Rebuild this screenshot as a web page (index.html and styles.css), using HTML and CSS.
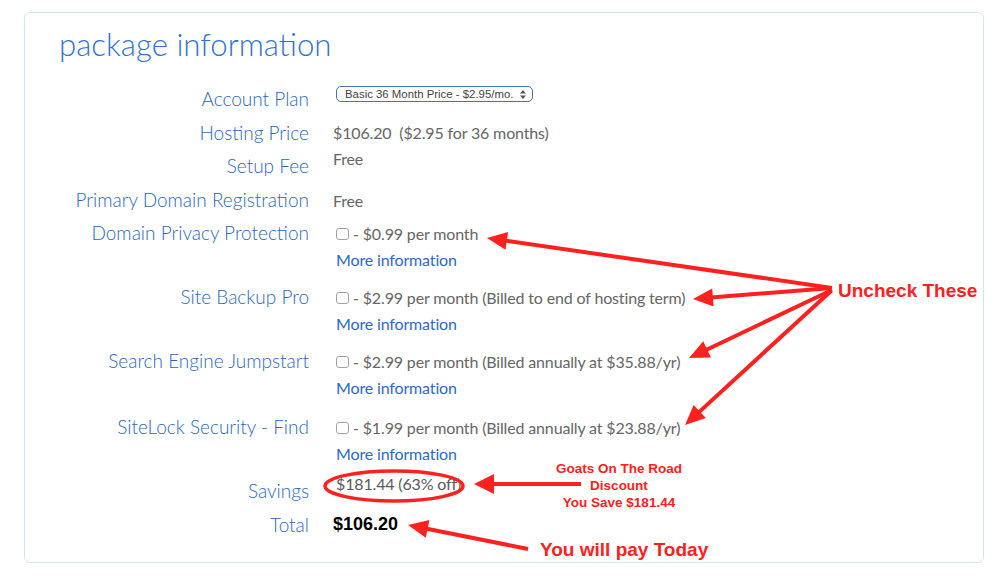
FILE: index.html
```html
<!DOCTYPE html>
<html lang="en">
<head>
    <meta charset="UTF-8">
    <meta name="viewport" content="width=device-width, initial-scale=1.0">
    <title>Package Information</title>
    <link rel="stylesheet" href="styles.css">
</head>
<body>
    <div class="page">
        <div class="card">
            <h1 class="title">package information</h1>

            <div class="form">
                <div class="row">
                    <div class="label">Account Plan</div>
                    <div class="value">
                        <div class="select">
                            <span>Basic 36 Month Price - $2.95/mo.</span>
                            <svg width="6" height="9" viewBox="0 0 6 9"><path d="M3 0 L6 3.5 H0 Z M3 9 L6 5.5 H0 Z" fill="#555"/></svg>
                        </div>
                    </div>
                </div>
                <div class="row">
                    <div class="label">Hosting Price</div>
                    <div class="value">$106.20&nbsp; ($2.95 for 36 months)</div>
                </div>
                <div class="row">
                    <div class="label">Setup Fee</div>
                    <div class="value value-high">Free</div>
                </div>
                <div class="row">
                    <div class="label">Primary Domain Registration</div>
                    <div class="value value-low">Free</div>
                </div>

                <div class="row row-option">
                    <div class="label">Domain Privacy Protection</div>
                    <div class="value">
                        <div class="line"><span class="check"></span> - $0.99 per month</div>
                        <a class="more" href="#">More information</a>
                    </div>
                </div>
                <div class="row row-option">
                    <div class="label">Site Backup Pro</div>
                    <div class="value">
                        <div class="line"><span class="check"></span> - $2.99 per month (Billed to end of hosting term)</div>
                        <a class="more" href="#">More information</a>
                    </div>
                </div>
                <div class="row row-option row-tall">
                    <div class="label">Search Engine Jumpstart</div>
                    <div class="value">
                        <div class="line"><span class="check"></span> - $2.99 per month (Billed annually at $35.88/yr)</div>
                        <a class="more" href="#">More information</a>
                    </div>
                </div>
                <div class="row row-option">
                    <div class="label">SiteLock Security - Find</div>
                    <div class="value">
                        <div class="line"><span class="check"></span> - $1.99 per month (Billed annually at $23.88/yr)</div>
                        <a class="more" href="#">More information</a>
                    </div>
                </div>

                <div class="row">
                    <div class="label">Savings</div>
                    <div class="value value-high savings">$181.44 (63% off)</div>
                </div>
                <div class="row">
                    <div class="label">Total</div>
                    <div class="value total">$106.20</div>
                </div>
            </div>
        </div>

        <!-- red annotations drawn over the screenshot -->
        <svg class="marks" width="1007" height="585" viewBox="0 0 1007 585">
            <g stroke="#ff2020" stroke-width="4" fill="none">
                <line x1="832" y1="288" x2="505" y2="240.6"/>
                <line x1="832" y1="288" x2="711" y2="297.5"/>
                <line x1="832" y1="290" x2="705.5" y2="350.2"/>
                <line x1="831" y1="291" x2="698.2" y2="412.9"/>
                <line x1="581" y1="484" x2="492" y2="484"/>
                <line x1="528" y1="549" x2="425.6" y2="528.5"/>
                <ellipse cx="394" cy="486" rx="69" ry="15" stroke-width="3.5"/>
            </g>
            <g fill="#ff2020">
                <polygon points="487,238 508.1,232 505.5,249.8"/>
                <polygon points="693,299 712.2,288.4 713.6,306.4"/>
                <polygon points="689,358 703.2,341.3 711,357.5"/>
                <polygon points="685,425 693.6,404.9 705.8,418.1"/>
                <polygon points="474,484 494,474 494,494"/>
                <polygon points="408,525 429.4,520.1 425.8,537.7"/>
            </g>
        </svg>
        <div class="note note-uncheck">Uncheck These</div>
        <div class="note note-discount">Goats On The Road<br>Discount<br>You Save $181.44</div>
        <div class="note note-pay">You will pay Today</div>
    </div>
</body>
</html>
```

FILE: styles.css
```css
body {
    margin: 0;
    background: white;
    font-family: Lato, "Open Sans", sans-serif;
}
.page {
    position: relative;
    width: 1007px;
    height: 585px;
    padding: 12px 23px 0 24px;
    box-sizing: border-box;
}
.card {
    border: 1px solid #d5e6f3;
    border-radius: 6px;
    padding: 11px 36px 21px 36px;
}
.title {
    margin: 0 0 0 -2px;
    font-size: 31.2px;
    line-height: 40px;
    font-weight: 300;
    color: #2f72d2;
}
.form {
    margin-top: 18px;
}
.row {
    display: grid;
    grid-template-columns: 248px 1fr;
    column-gap: 24px;
}
.label {
    text-align: right;
    font-size: 19px;
    font-weight: 300;
    line-height: 33.5px;
    color: #2a68bd;
    white-space: nowrap;
}
.value {
    font-size: 16px;
    letter-spacing: -0.15px;
    line-height: 33.5px;
    color: #666;
    white-space: nowrap;
}
.value-high {
    line-height: 20px;
}
.value-low {
    padding-top: 2px;
    line-height: 31.5px;
}
.row-option {
    padding-bottom: 7px;
}
.row-tall {
    padding-bottom: 9px;
}
.row-option .value {
    padding-top: 5px;
    line-height: 26px;
}
.line {
    display: flex;
    align-items: center;
}
.check {
    display: inline-block;
    width: 11px;
    height: 10px;
    margin: 0 4px 0 3px;
    border: 1px solid #a3a3a3;
    border-radius: 3px;
    background: white;
}
.more {
    display: block;
    color: #2d6bc7;
    text-decoration: none;
    margin-left: 3px;
}
.select {
    display: inline-flex;
    align-items: center;
    justify-content: space-between;
    box-sizing: border-box;
    width: 197px;
    height: 16px;
    margin: 4px 0 0 3px;
    padding: 0 6px 0 8px;
    border: 1px solid #4a73b0;
    border-radius: 5px;
    font-family: "Liberation Sans", Arial, sans-serif;
    font-size: 11.4px;
    letter-spacing: 0;
    line-height: 14px;
    color: #444;
    vertical-align: top;
}
.savings {
    margin-left: 3px;
    color: #5a5a5a;
}
.total {
    font-family: "Liberation Sans", Arial, sans-serif;
    font-weight: bold;
    font-size: 18px;
    letter-spacing: 0;
    color: #000;
}
.marks {
    position: absolute;
    left: 0;
    top: 0;
    pointer-events: none;
}
.note {
    position: absolute;
    font-family: "Liberation Sans", Arial, sans-serif;
    font-weight: bold;
    color: #ff2020;
    white-space: nowrap;
}
.note-uncheck {
    left: 838px;
    top: 280px;
    font-size: 19px;
    line-height: 22px;
}
.note-discount {
    left: 529px;
    top: 460px;
    width: 180px;
    text-align: center;
    font-size: 13.5px;
    line-height: 17px;
}
.note-pay {
    left: 540px;
    top: 539px;
    font-size: 19px;
    line-height: 22px;
}
```
